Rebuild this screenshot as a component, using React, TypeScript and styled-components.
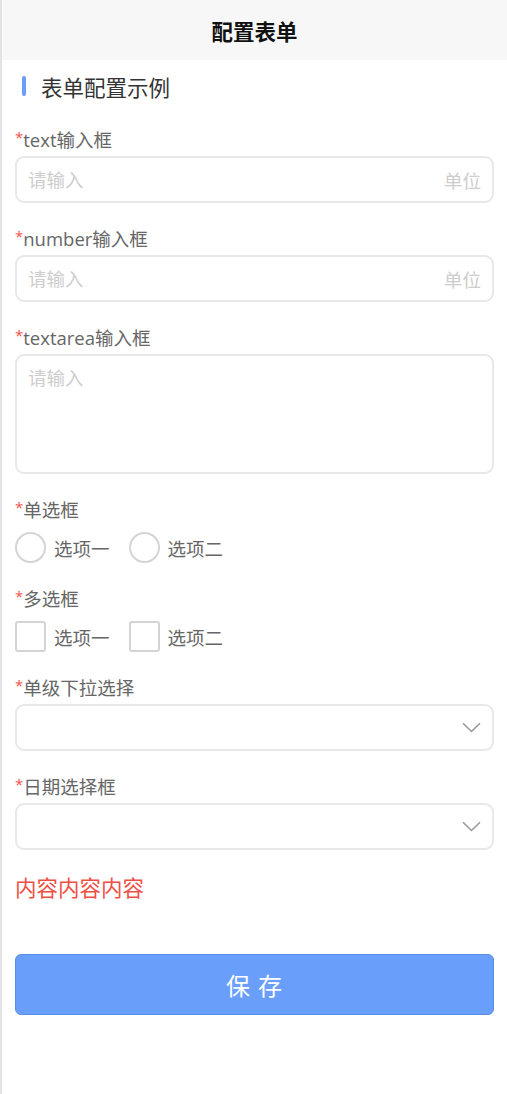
import React from "react";
import styled, { createGlobalStyle } from "styled-components";

const Global = createGlobalStyle`
  html, body { margin: 0; padding: 0; background: #fff; }
  body { font-family: "Open Sans", "Noto Sans CJK SC", sans-serif; }
  * { box-sizing: border-box; }
`;

const Page = styled.div`
  min-height: 100vh;
  border-left: 2px solid #e2e2e2;
  background: #fff;
  display: flex;
  flex-direction: column;
`;

const Header = styled.header`
  height: 60px;
  background: #f7f7f7;
  display: flex;
  align-items: center;
  justify-content: center;
  font-size: 21.5px;
  font-weight: 700;
  color: #111;
`;

const SectionTitle = styled.div`
  margin-top: 11px;
  height: 30px;
  padding-left: 20px;
  display: flex;
  align-items: center;
  gap: 15px;
  font-size: 21.5px;
  color: #333;
`;

const Bar = styled.span`
  width: 4px;
  height: 20px;
  border-radius: 2px;
  background: #6a9ef8;
`;

const Form = styled.form`
  padding: 27px 13px 0;
  display: flex;
  flex-direction: column;
`;

const Field = styled.div`
  display: flex;
  flex-direction: column;
  margin-bottom: 24px;
`;

const Label = styled.label`
  height: 24px;
  line-height: 24px;
  font-size: 18.5px;
  color: #666;
  margin-bottom: 4px;
  display: flex;
  align-items: center;
`;

const Star = styled.span`
  color: #f0544c;
  font-size: 15px;
  line-height: 1;
  margin-bottom: 5px;
`;

const Box = styled.div<{ $tall?: boolean }>`
  height: ${(p) => (p.$tall ? "120px" : "47px")};
  border: 2px solid #e8e8e8;
  border-radius: 9px;
  display: flex;
  align-items: ${(p) => (p.$tall ? "flex-start" : "center")};
  padding: ${(p) => (p.$tall ? "10px 11px" : "0 11px")};
  background: #fff;
`;

const TextInput = styled.input`
  flex: 1;
  min-width: 0;
  border: none;
  outline: none;
  background: transparent;
  font-family: inherit;
  font-size: 18.5px;
  color: #333;
  padding: 0;
  &::placeholder { color: #cdcdcd; }
`;

const TextArea = styled.textarea`
  flex: 1;
  height: 100%;
  border: none;
  outline: none;
  resize: none;
  background: transparent;
  font-family: inherit;
  font-size: 18.5px;
  line-height: 24px;
  padding: 0;
  color: #333;
  &::placeholder { color: #cdcdcd; }
`;

const Unit = styled.span`
  font-size: 18.5px;
  color: #cdcdcd;
`;

const Choices = styled.div`
  margin-top: 6px;
  display: flex;
  gap: 19px;
`;

const Choice = styled.div`
  display: flex;
  align-items: center;
  gap: 8px;
  font-size: 18.5px;
  color: #666;
`;

const Mark = styled.span<{ $round?: boolean }>`
  width: 31px;
  height: 31px;
  border: 2px solid #d4d4d4;
  border-radius: ${(p) => (p.$round ? "50%" : "3px")};
  background: #fff;
`;

const Chevron = styled.svg`
  margin-left: auto;
  flex: none;
`;

const Notice = styled.div`
  margin-top: -1px;
  height: 30px;
  line-height: 30px;
  font-size: 21.5px;
  color: #ee4f45;
`;

const SaveButton = styled.button`
  margin-top: 51px;
  height: 61px;
  border: 1px solid #5a8ee8;
  border-radius: 6px;
  background: #699ffb;
  color: #fff;
  font-family: inherit;
  font-size: 24px;
  letter-spacing: 1px;
`;

const Req = ({ children }: { children: React.ReactNode }) => (
  <Label>
    <Star>*</Star>
    {children}
  </Label>
);

const Down = () => (
  <Chevron width="19" height="11" viewBox="0 0 19 11">
    <path d="M1 1.2 L9.5 9.5 L18 1.2" fill="none" stroke="#999" strokeWidth="1.6" />
  </Chevron>
);

export default function App() {
  return (
    <>
      <Global />
      <Page>
        <Header>配置表单</Header>
        <SectionTitle>
          <Bar />
          表单配置示例
        </SectionTitle>
        <Form onSubmit={(e) => e.preventDefault()}>
          <Field>
            <Req>text输入框</Req>
            <Box>
              <TextInput placeholder="请输入" />
              <Unit>单位</Unit>
            </Box>
          </Field>
          <Field>
            <Req>number输入框</Req>
            <Box>
              <TextInput placeholder="请输入" />
              <Unit>单位</Unit>
            </Box>
          </Field>
          <Field>
            <Req>textarea输入框</Req>
            <Box $tall>
              <TextArea placeholder="请输入" />
            </Box>
          </Field>
          <Field>
            <Req>单选框</Req>
            <Choices>
              <Choice>
                <Mark $round />
                选项一
              </Choice>
              <Choice>
                <Mark $round />
                选项二
              </Choice>
            </Choices>
          </Field>
          <Field>
            <Req>多选框</Req>
            <Choices>
              <Choice>
                <Mark />
                选项一
              </Choice>
              <Choice>
                <Mark />
                选项二
              </Choice>
            </Choices>
          </Field>
          <Field>
            <Req>单级下拉选择</Req>
            <Box>
              <Down />
            </Box>
          </Field>
          <Field>
            <Req>日期选择框</Req>
            <Box>
              <Down />
            </Box>
          </Field>
          <Notice>内容内容内容</Notice>
          <SaveButton type="submit">保 存</SaveButton>
        </Form>
      </Page>
    </>
  );
}
